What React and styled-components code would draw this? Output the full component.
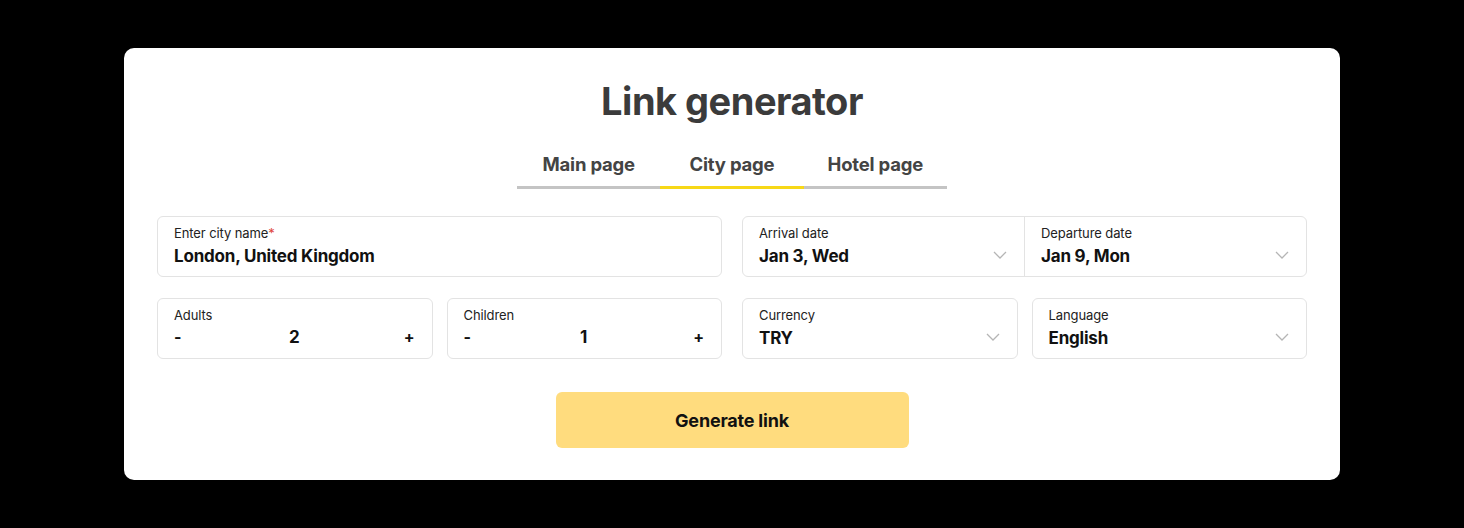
import React, { useState } from "react";
import styled, { createGlobalStyle } from "styled-components";

const Global = createGlobalStyle`
  html, body { margin: 0; padding: 0; background: #000; }
  body { font-family: Inter, "Liberation Sans", Arial, sans-serif; }
  * { box-sizing: border-box; }
`;

const Page = styled.div`
  width: 1464px;
  height: 528px;
  background: #000;
  padding: 48px 124px;
`;

const Card = styled.div`
  background: #fff;
  border-radius: 10px;
  height: 432px;
  padding: 28px 33px 32px;
  display: flex;
  flex-direction: column;
  align-items: center;
`;

const Title = styled.h1`
  margin: 0;
  font-size: 38px;
  line-height: 50px;
  font-weight: 700;
  color: #3b3b3b;
  letter-spacing: -0.5px;
`;

const Tabs = styled.div`
  display: flex;
  margin-top: 21px;
`;

const Tab = styled.div`
  width: 143.3px;
  height: 42px;
  display: flex;
  align-items: flex-start;
  justify-content: center;
  padding-top: 6px;
  font-size: 18.5px;
  font-weight: 700;
  color: #444;
  border-bottom: 3px solid ${(p) => (p.$active ? "#f7d817" : "#c4c4c4")};
  letter-spacing: -0.2px;
  cursor: pointer;
`;

const Form = styled.div`
  width: 100%;
  margin-top: 27px;
  display: grid;
  grid-template-columns: 1fr 1fr;
  column-gap: 20px;
  row-gap: 21px;
`;

const Pair = styled.div`
  display: grid;
  grid-template-columns: 1fr 1fr;
  column-gap: 14px;
`;

const Box = styled.div`
  height: 61px;
  border: 1px solid #e3e3e3;
  border-radius: 6px;
  background: #fff;
  display: flex;
`;

const Cell = styled.div`
  flex: 1;
  position: relative;
  padding: 8px 16px 0 16px;
  border-left: ${(p) => (p.$divider ? "1px solid #e3e3e3" : "none")};
`;

const Label = styled.div`
  font-size: 13px;
  line-height: 16px;
  color: #222;
  letter-spacing: -0.1px;
`;

const Req = styled.span`
  color: #e0443a;
`;

const Value = styled.div`
  margin-top: 4px;
  font-size: 17px;
  line-height: 22px;
  font-weight: 700;
  color: #111;
  letter-spacing: -0.2px;
`;

const Chevron = styled.svg`
  position: absolute;
  right: 17px;
  top: 34px;
`;

const Counter = styled.div`
  margin-top: 3px;
  display: flex;
  justify-content: space-between;
  align-items: center;
  font-size: 17px;
  line-height: 22px;
  font-weight: 700;
  color: #111;
  padding-right: 1px;
`;

const Sign = styled.span`
  width: 12px;
  text-align: ${(p) => p.$align};
  font-size: 16px;
`;

const Button = styled.button`
  margin-top: 33px;
  width: 353px;
  height: 57px;
  border: none;
  border-radius: 6px;
  background: #ffdc7e;
  font-family: inherit;
  font-size: 18px;
  font-weight: 700;
  color: #111;
  letter-spacing: -0.2px;
  cursor: pointer;
`;

const Down = () => (
  <Chevron width="14" height="8" viewBox="0 0 14 8" fill="none">
    <path d="M1 1l6 6 6-6" stroke="#b5b5b5" strokeWidth="1.3" />
  </Chevron>
);

const Select = ({ label, value }) => (
  <Box>
    <Cell>
      <Label>{label}</Label>
      <Value>{value}</Value>
      <Down />
    </Cell>
  </Box>
);

const Stepper = ({ label, value }) => (
  <Box>
    <Cell>
      <Label>{label}</Label>
      <Counter>
        <Sign $align="left">-</Sign>
        <span>{value}</span>
        <Sign $align="right">+</Sign>
      </Counter>
    </Cell>
  </Box>
);

export default function App() {
  const [tab, setTab] = useState(1);
  const tabs = ["Main page", "City page", "Hotel page"];
  return (
    <Page>
      <Global />
      <Card>
        <Title>Link generator</Title>
        <Tabs>
          {tabs.map((t, i) => (
            <Tab key={t} $active={i === tab} onClick={() => setTab(i)}>
              {t}
            </Tab>
          ))}
        </Tabs>
        <Form>
          <Box>
            <Cell>
              <Label>
                Enter city name<Req>*</Req>
              </Label>
              <Value>London, United Kingdom</Value>
            </Cell>
          </Box>
          <Box>
            <Cell>
              <Label>Arrival date</Label>
              <Value>Jan 3, Wed</Value>
              <Down />
            </Cell>
            <Cell $divider>
              <Label>Departure date</Label>
              <Value>Jan 9, Mon</Value>
              <Down />
            </Cell>
          </Box>
          <Pair>
            <Stepper label="Adults" value="2" />
            <Stepper label="Children" value="1" />
          </Pair>
          <Pair>
            <Select label="Currency" value="TRY" />
            <Select label="Language" value="English" />
          </Pair>
        </Form>
        <Button>Generate link</Button>
      </Card>
    </Page>
  );
}
